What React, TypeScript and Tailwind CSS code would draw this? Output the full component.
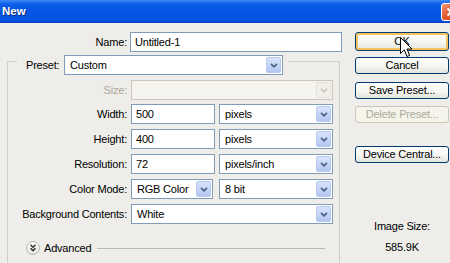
import React from "react";

const Chevron = ({ disabled }: { disabled?: boolean }) => (
  <svg width="8" height="5" viewBox="0 0 8 5">
    <polyline
      points="1,0.8 4,3.8 7,0.8"
      fill="none"
      stroke={disabled ? "#c9c7ba" : "#4d6185"}
      strokeWidth="1.7"
    />
  </svg>
);

const Select = ({ value, w, disabled }: { value: string; w: string; disabled?: boolean }) => (
  <div
    className={`${w} h-[20px] flex items-stretch border ${
      disabled ? "border-[#c9c7ba] bg-[#f4f3ee]" : "border-[#7f9db9] bg-white"
    }`}
  >
    <div className="flex-1 pl-[5px] flex items-center overflow-hidden whitespace-nowrap">{value}</div>
    <div
      className={`m-px w-[15px] flex items-center justify-center rounded-[2px] border ${
        disabled
          ? "border-[#e4e3dc] bg-[#f0efe9]"
          : "border-[#b8c8ee] bg-[linear-gradient(#d9e4fc,#c2d2f6_60%,#b3c6f1)]"
      }`}
    >
      <Chevron disabled={disabled} />
    </div>
  </div>
);

const Input = ({ value, w }: { value: string; w: string }) => (
  <div className={`${w} h-[20px] border border-[#7f9db9] bg-white pl-[4px] flex items-center`}>{value}</div>
);

const Label = ({ children, disabled }: { children: React.ReactNode; disabled?: boolean }) => (
  <div className={`w-[119px] text-right ${disabled ? "text-[#aca899]" : "text-black"}`}>{children}</div>
);

const Button = ({
  children,
  h = "h-[17px]",
  mt,
  disabled,
  hot,
}: {
  children: React.ReactNode;
  h?: string;
  mt: string;
  disabled?: boolean;
  hot?: boolean;
}) => (
  <div
    className={`${mt} ${h} w-[94px] rounded-[3px] border flex items-center justify-center ${
      disabled
        ? "border-[#c9c7ba] bg-[#f5f4ea] text-[#aca899]"
        : "border-[#003c74] bg-[linear-gradient(#ffffff,#f4f4f0_60%,#e3e2da)] text-black"
    } ${hot ? "shadow-[inset_0_0_0_2px_#f5c25c]" : ""}`}
  >
    {children}
  </div>
);

export default function App() {
  return (
    <div className="relative w-[450px] h-[263px] overflow-hidden bg-[#eeede9] font-['Liberation_Sans',Arial,sans-serif] text-[11px] leading-[13px] tracking-[-0.2px] text-black flex flex-col">
      {/* Title bar */}
      <div className="h-[23px] flex items-center justify-between bg-[linear-gradient(#3c8af4,#0b5ee9_18%,#0555e4_50%,#0453e0_85%,#0344c8)]">
        <div className="pl-[2px] text-white font-bold text-[11.5px] tracking-normal [text-shadow:1px_1px_0_#0a2a80]">New</div>
        <div className="mr-[-12px] w-[21px] h-[18px] rounded-[3px] border border-white bg-[linear-gradient(135deg,#f09a7a,#e2582f_45%,#c9431f)] flex items-center justify-start pl-[4px]">
          <svg width="10" height="10" viewBox="0 0 10 10">
            <path d="M1.5 1.5 L8.5 8.5 M8.5 1.5 L1.5 8.5" stroke="white" strokeWidth="2" />
          </svg>
        </div>
      </div>

      {/* Body */}
      <div className="flex-1 flex">
        {/* Left column */}
        <div className="w-[343px] pt-[9px] flex flex-col">
          <div className="flex items-center h-[20px]">
            <div className="w-[127px] text-right">Name:</div>
            <div className="ml-[3px]">
              <Input value="Untitled-1" w="w-[212px]" />
            </div>
          </div>

          {/* Fieldset */}
          <div className="mt-[9px] ml-[7px] w-[333px] flex-1 border-l border-r border-[#cfcfc6] flex flex-col">
            <div className="-mt-[6px] h-[20px] flex items-start">
              <div className="w-[9px] h-px mt-[6px] bg-[#cfcfc6]" />
              <div className="ml-[9px] w-[38px] h-[20px] flex items-center">Preset:</div>
              <Select value="Custom" w="w-[219px]" />
              <div className="ml-[5px] flex-1 h-px mt-[6px] bg-[#cfcfc6]" />
            </div>

            <div className="mt-[5px] flex items-center">
              <Label disabled>Size:</Label>
              <div className="ml-[4px]">
                <Select value="" w="w-[202px]" disabled />
              </div>
            </div>

            <div className="mt-[4px] flex items-center">
              <Label>Width:</Label>
              <div className="ml-[4px] flex gap-[4px]">
                <Input value="500" w="w-[84px]" />
                <Select value="pixels" w="w-[114px]" />
              </div>
            </div>

            <div className="mt-[5px] flex items-center">
              <Label>Height:</Label>
              <div className="ml-[4px] flex gap-[4px]">
                <Input value="400" w="w-[84px]" />
                <Select value="pixels" w="w-[114px]" />
              </div>
            </div>

            <div className="mt-[5px] flex items-center">
              <Label>Resolution:</Label>
              <div className="ml-[4px] flex gap-[4px]">
                <Input value="72" w="w-[84px]" />
                <Select value="pixels/inch" w="w-[114px]" />
              </div>
            </div>

            <div className="mt-[5px] flex items-center">
              <Label>Color Mode:</Label>
              <div className="ml-[4px] flex gap-[6px]">
                <Select value="RGB Color" w="w-[82px]" />
                <Select value="8 bit" w="w-[114px]" />
              </div>
            </div>

            <div className="mt-[5px] flex items-center">
              <div className="w-[119px] text-right whitespace-nowrap">Background Contents:</div>
              <div className="ml-[4px]">
                <Select value="White" w="w-[202px]" />
              </div>
            </div>

            <div className="mt-[17px] h-[14px] flex items-center">
              <div className="ml-[18px] w-[14px] h-[14px] rounded-full border border-[#b4b4b0] bg-[linear-gradient(#ffffff,#e6e6e2)] flex items-center justify-center">
                <svg width="10" height="10" viewBox="0 0 10 10">
                  <polyline points="2.5,1.8 5,4.2 7.5,1.8" fill="none" stroke="#333" strokeWidth="1.5" />
                  <polyline points="2.5,5.2 5,7.6 7.5,5.2" fill="none" stroke="#333" strokeWidth="1.5" />
                </svg>
              </div>
              <div className="ml-[4px]">Advanced</div>
              <div className="ml-[6px] mr-[14px] flex-1 h-px bg-[#b8b8b4]" />
            </div>
          </div>
        </div>

        {/* Right column */}
        <div className="ml-[12px] w-[94px] pt-[9px] flex flex-col">
          <Button mt="mt-0" h="h-[19px]" hot>
            OK
          </Button>
          <Button mt="mt-[6px]">Cancel</Button>
          <Button mt="mt-[8px]">Save Preset...</Button>
          <Button mt="mt-[7px]" disabled>
            Delete Preset...
          </Button>
          <Button mt="mt-[23px]">Device Central...</Button>
          <div className="mt-[57px] text-center">Image Size:</div>
          <div className="mt-[8px] text-center">585.9K</div>
        </div>
      </div>

      {/* Mouse cursor over OK */}
      <svg className="absolute left-[400px] top-[37px]" width="13" height="21" viewBox="0 0 13 21">
        <path
          d="M0.5 0.5 L0.5 16.5 L4.3 12.8 L7 19.5 L9.6 18.4 L7 12 L12 12 Z"
          fill="white"
          stroke="black"
          strokeWidth="1"
          strokeLinejoin="miter"
        />
      </svg>
    </div>
  );
}
